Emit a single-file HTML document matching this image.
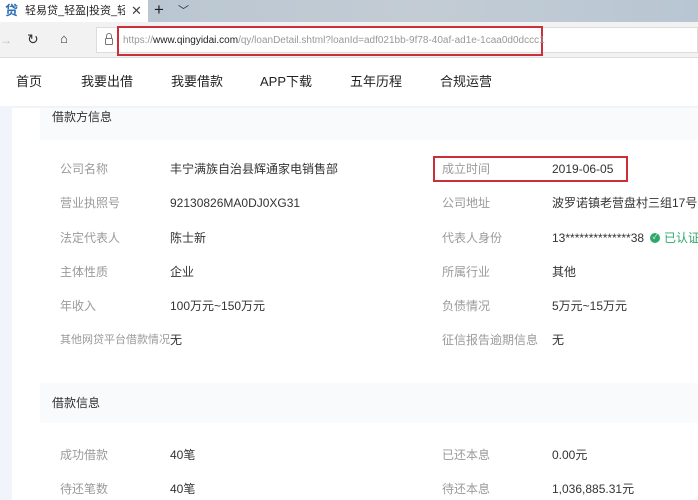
<!DOCTYPE html>
<html><head><meta charset="utf-8"><style>
*{margin:0;padding:0;box-sizing:border-box}
body{width:698px;height:500px;overflow:hidden;background:#fff;font-family:"Liberation Sans","Noto Sans CJK SC",sans-serif;position:relative}
.a{position:absolute;white-space:nowrap;line-height:16px}
.lbl{color:#9a9a9a;font-size:12px}
.val{color:#333;font-size:12px}
.v{display:inline-block;vertical-align:top;line-height:16px}
</style></head><body>
<div class="a" style="left:0;top:0;width:698px;height:22px;background:linear-gradient(90deg,#b5c3d1,#c3ccd4 60%,#b8c6d3)"></div>
<div class="a" style="left:0;top:0;width:148px;height:22px;background:#fff"></div>
<div class="a" style="left:5px;top:3px;font-size:13px;color:#2a6db5;font-weight:bold">贷</div>
<div class="a" style="left:25px;top:3px;width:100px;overflow:hidden;font-size:11px;color:#222">轻易贷_轻盈|投资_轻易贷</div>
<div class="a" style="left:131px;top:3px;font-size:13px;color:#444">✕</div>
<div class="a" style="left:154px;top:2px;font-size:17px;color:#222">+</div>
<div class="a" style="left:178px;top:3px;font-size:11px;color:#333">﹀</div>
<div class="a" style="left:0;top:22px;width:698px;height:36px;background:#f2f2f2;border-bottom:1px solid #ddd"></div>
<div class="a" style="left:0;top:32px;font-size:12px;color:#bbb">→</div>
<div class="a" style="left:27px;top:31px;font-size:14px;color:#333">↻</div>
<div class="a" style="left:60px;top:31px;font-size:13px;color:#333">⌂</div>
<div class="a" style="left:96px;top:27px;width:602px;height:26px;background:#fff;border:1px solid #ddd"></div>
<div class="a" style="left:105px;top:38px;width:8px;height:7px;border:1px solid #777;border-radius:1px"></div>
<div class="a" style="left:106px;top:33px;width:6px;height:6px;border:1px solid #777;border-bottom:none;border-radius:3px 3px 0 0"></div>
<div class="a" style="left:117px;top:26px;width:426px;height:30px;border:2px solid #c9303a"></div>
<div class="a" style="left:123px;top:33px;font-size:10px;color:#999">https://<span style="color:#222">www.qingyidai.com</span>/qy/loanDetail.shtml?loanId=adf021bb-9f78-40af-ad1e-1caa0d0dccc1</div>
<div class="a" style="left:0;top:58px;width:698px;height:48px;background:#fff"></div>
<div class="a val" style="left:16px;top:74px;font-size:13px;color:#222">首页</div>
<div class="a val" style="left:81px;top:74px;font-size:13px;color:#222">我要出借</div>
<div class="a val" style="left:171px;top:74px;font-size:13px;color:#222">我要借款</div>
<div class="a val" style="left:260px;top:74px;font-size:13px;color:#222">APP下载</div>
<div class="a val" style="left:350px;top:74px;font-size:13px;color:#222">五年历程</div>
<div class="a val" style="left:440px;top:74px;font-size:13px;color:#222">合规运营</div>
<div class="a" style="left:0;top:106px;width:12px;height:394px;background:#f1f4fa"></div>
<div class="a" style="left:12px;top:106px;width:686px;height:2px;background:#f1f3f6"></div>
<div class="a" style="left:40px;top:108px;width:658px;height:32px;background:#f9fafb"></div>
<div class="a val" style="left:52px;top:109px;font-size:12px">借款方信息</div>
<div class="a" style="left:40px;top:383px;width:658px;height:40px;background:#f9fafb"></div>
<div class="a val" style="left:52px;top:395px;font-size:12px">借款信息</div>
<div class="a" style="left:433px;top:156px;width:195px;height:26px;border:2px solid #c9303a"></div>
<div class="a lbl" style="left:60px;top:161px">公司名称</div><div class="a val" style="left:170px;top:161px">丰宁满族自治县辉通家电销售部</div>
<div class="a lbl" style="left:442px;top:161px">成立时间</div><div class="a val" style="left:552px;top:161px">2019-06-05</div>
<div class="a lbl" style="left:60px;top:195px">营业执照号</div><div class="a val" style="left:170px;top:195px">92130826MA0DJ0XG31</div>
<div class="a lbl" style="left:442px;top:195px">公司地址</div><div class="a val" style="left:552px;top:195px">波罗诺镇老营盘村三组17号</div>
<div class="a lbl" style="left:60px;top:230px">法定代表人</div><div class="a val" style="left:170px;top:230px">陈士新</div>
<div class="a lbl" style="left:442px;top:230px">代表人身份</div><div class="a val" style="left:552px;top:230px">13**************38</div>
<div class="a" style="left:650px;top:233px;width:10px;height:10px;border-radius:50%;background:#2ea86a;color:#fff;font-size:7px;text-align:center;line-height:10px">✓</div>
<div class="a" style="left:664px;top:230px;font-size:12px;color:#2ea86a">已认证</div>
<div class="a lbl" style="left:60px;top:264px">主体性质</div><div class="a val" style="left:170px;top:264px">企业</div>
<div class="a lbl" style="left:442px;top:264px">所属行业</div><div class="a val" style="left:552px;top:264px">其他</div>
<div class="a lbl" style="left:60px;top:298px">年收入</div><div class="a val" style="left:170px;top:298px">100万元~150万元</div>
<div class="a lbl" style="left:442px;top:298px">负债情况</div><div class="a val" style="left:552px;top:298px">5万元~15万元</div>
<div class="a lbl" style="left:60px;top:332px;font-size:11px">其他网贷平台借款情况</div><div class="a val" style="left:170px;top:332px">无</div>
<div class="a lbl" style="left:442px;top:332px">征信报告逾期信息</div><div class="a val" style="left:552px;top:332px">无</div>
<div class="a lbl" style="left:60px;top:447px">成功借款</div><div class="a val" style="left:170px;top:447px">40笔</div>
<div class="a lbl" style="left:442px;top:447px">已还本息</div><div class="a val" style="left:552px;top:447px">0.00元</div>
<div class="a lbl" style="left:60px;top:481px">待还笔数</div><div class="a val" style="left:170px;top:481px">40笔</div>
<div class="a lbl" style="left:442px;top:481px">待还本息</div><div class="a val" style="left:552px;top:481px">1,036,885.31元</div>
</body></html>
